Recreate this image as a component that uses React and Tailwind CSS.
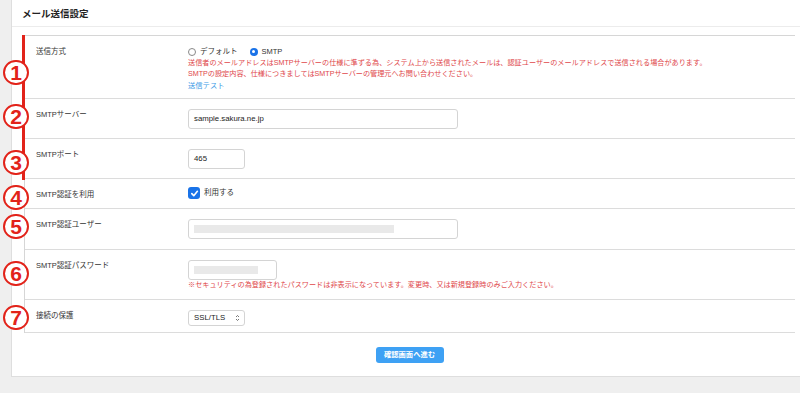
import React from "react";

const F = { fontFamily: '"Liberation Sans","Noto Sans CJK JP",sans-serif' };

function Circle({ n, top }) {
  return (
    <div
      className="absolute left-[3px] w-[26px] h-[25px] rounded-full border-2 border-[#e2231a] bg-white flex items-center justify-center text-[#e2231a] font-bold text-[21px] leading-none"
      style={{ top, fontFamily: '"Liberation Sans",sans-serif' }}
    >
      {n}
    </div>
  );
}

function Row({ label, h, children }) {
  return (
    <div className={`flex border-b border-[#dcdcdc] ${h}`}>
      <div className="w-[163px] shrink-0 pl-[11px] pt-[11px] text-[7.5px] leading-[9px] text-[#333]">{label}</div>
      <div className="flex-1 pt-[10px]">{children}</div>
    </div>
  );
}

export default function App() {
  return (
    <div className="relative w-[800px] h-[393px] bg-[#efefef] overflow-hidden" style={F}>
      <div className="ml-[11px] h-[377px] bg-white border-l border-b border-[#dedede] flex flex-col">
        <div className="h-[27px] border-b border-[#ececec] pl-[10px] pt-[8px] text-[9.5px] leading-[11px] font-bold text-[#222]">
          メール送信設定
        </div>
        <div className="mt-[8px] ml-[12px] mr-[5px] border-t border-l border-[#d6d6d6]">
          <Row label="送信方式" h="h-[63px]">
            <div className="flex items-center gap-[4px] text-[7.5px] leading-[9px] text-[#333] mt-[1px]">
              <span className="w-[8px] h-[8px] rounded-full border border-[#888] bg-white" />
              <span>デフォルト</span>
              <span className="ml-[8px] w-[8px] h-[8px] rounded-full bg-[#1a73e8] flex items-center justify-center">
                <span className="w-[3px] h-[3px] rounded-full bg-white" />
              </span>
              <span>SMTP</span>
            </div>
            <div className="mt-[2px] text-[7.15px] leading-[11px] text-[#e0474a] whitespace-nowrap">
              送信者のメールアドレスはSMTPサーバーの仕様に準ずる為、システム上から送信されたメールは、認証ユーザーのメールアドレスで送信される場合があります。
            </div>
            <div className="text-[7.15px] leading-[11px] text-[#e0474a] whitespace-nowrap">
              SMTPの設定内容、仕様につきましてはSMTPサーバーの管理元へお問い合わせください。
            </div>
            <div className="text-[7.3px] leading-[11px] text-[#3d9be6]">送信テスト</div>
          </Row>
          <Row label="SMTPサーバー" h="h-[40px]">
            <div className="w-[270px] h-[20px] border border-[#d4d4d4] rounded-[3px] flex items-center pl-[5px] text-[7.8px] text-[#222]">
              sample.sakura.ne.jp
            </div>
          </Row>
          <Row label="SMTPポート" h="h-[40px]">
            <div className="w-[57px] h-[20px] border border-[#d4d4d4] rounded-[3px] flex items-center pl-[5px] text-[7.8px] text-[#222]">
              465
            </div>
          </Row>
          <Row label="SMTP認証を利用" h="h-[30px]">
            <div className="flex items-center gap-[4px] mt-[-2px]">
              <span className="w-[12px] h-[12px] rounded-[3px] bg-[#1a73e8] flex items-center justify-center">
                <svg width="9" height="9" viewBox="0 0 10 10">
                  <path d="M2 5.2 L4.2 7.4 L8.2 2.6" fill="none" stroke="white" strokeWidth="1.8" strokeLinecap="round" strokeLinejoin="round" />
                </svg>
              </span>
              <span className="text-[7.5px] text-[#333]">利用する</span>
            </div>
          </Row>
          <Row label="SMTP認証ユーザー" h="h-[41px]">
            <div className="w-[270px] h-[20px] border border-[#d4d4d4] rounded-[3px] flex items-center pl-[5px]">
              <div className="w-[200px] h-[8px] bg-[#e9e9e9]" />
            </div>
          </Row>
          <Row label="SMTP認証パスワード" h="h-[50px]">
            <div className="w-[89px] h-[20px] border border-[#d4d4d4] rounded-[3px] flex items-center pl-[5px]">
              <div className="w-[64px] h-[8px] bg-[#e9e9e9]" />
            </div>
            <div className="mt-[1px] text-[7.15px] leading-[9px] text-[#e0474a] whitespace-nowrap">
              ※セキュリティの為登録されたパスワードは非表示になっています。変更時、又は新規登録時のみご入力ください。
            </div>
          </Row>
          <Row label="接続の保護" h="h-[33px]">
            <div className="w-[57px] h-[16px] border border-[#d4d4d4] rounded-[3px] flex items-center justify-between pl-[5px] pr-[4px] text-[7.8px] text-[#222]">
              <span>SSL/TLS</span>
              <svg width="5" height="8" viewBox="0 0 5 8">
                <path d="M1 3 L2.5 1.5 L4 3 M1 5 L2.5 6.5 L4 5" fill="none" stroke="#555" strokeWidth="0.8" />
              </svg>
            </div>
          </Row>
        </div>
        <div className="ml-[12px] mr-[5px] flex justify-center pt-[14px]">
          <div className="w-[68px] h-[16px] rounded-[3px] bg-[#3ea1f4] flex items-center justify-center text-white font-bold text-[7.3px]">
            確認画面へ進む
          </div>
        </div>
      </div>
      <div className="absolute left-[22px] top-[35px] w-[3px] h-[145px] bg-[#e2231a]" />
      <Circle n="1" top={60} />
      <Circle n="2" top={104} />
      <Circle n="3" top={150} />
      <Circle n="4" top={185} />
      <Circle n="5" top={214} />
      <Circle n="6" top={261} />
      <Circle n="7" top={305} />
    </div>
  );
}
